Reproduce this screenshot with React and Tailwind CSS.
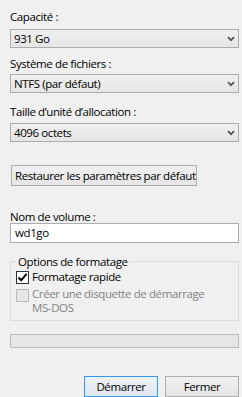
import React from 'react';

const font = { fontFamily: '"Segoe UI", "Open Sans", sans-serif' };

const Chevron = () => (
  <svg width="8" height="6" viewBox="0 0 8 6" className="mr-[3px]">
    <path d="M1 1.2 L4 4.2 L7 1.2" stroke="#555" strokeWidth="1.8" fill="none" />
  </svg>
);

const Combo = ({ value }) => (
  <div className="flex h-[19px] items-center justify-between border border-[#acacac] bg-gradient-to-b from-[#f0f0f0] to-[#e5e5e5] pl-[3px] text-[11.5px] leading-[16px] text-black">
    <span>{value}</span>
    <Chevron />
  </div>
);

const Label = ({ children, className = '' }) => (
  <div className={`h-[16px] text-[11.5px] leading-[16px] text-black ${className}`}>{children}</div>
);

export default function App() {
  return (
    <div
      className="flex h-[397px] w-[242px] flex-col overflow-hidden whitespace-nowrap bg-[#f0f0f0] pl-[10px] pr-[3px] pt-[9px] text-[11.5px] tracking-[-0.4px]"
      style={font}
    >
      <Label>Capacité :</Label>
      <div className="mt-[4px]">
        <Combo value="931 Go" />
      </div>

      <Label className="mt-[8px]">Système de fichiers :</Label>
      <div className="mt-[2px]">
        <Combo value="NTFS (par défaut)" />
      </div>

      <Label className="mt-[11px]">Taille d’unité d’allocation :</Label>
      <div className="mt-[3px]">
        <Combo value="4096 octets" />
      </div>

      <div className="mt-[23px] flex">
        <button className="ml-[1px] h-[21px] w-[186px] border border-[#adadad] bg-gradient-to-b from-[#f0f0f0] to-[#e5e5e5] px-[3px] text-left text-[11.5px] leading-[16px] text-black">
          Restaurer les paramètres par défaut
        </button>
      </div>

      <Label className="mt-[23px]">Nom de volume :</Label>
      <div className="mt-[-2px] flex h-[21px] items-center border border-[#abadb3] bg-white pl-[4px] text-[11.5px] leading-[16px] text-black">
        wd1go
      </div>

      <fieldset className="mt-[11px] border border-[#dcdcdc] pb-[5px] pl-[5px]">
        <legend className="px-[2px] text-[11.5px] leading-[15px] text-black">Options de formatage</legend>
        <div className="flex items-start">
          <div className="mt-[2px] flex h-[13px] w-[13px] items-center justify-center border border-[#333] bg-white">
            <svg width="11" height="11" viewBox="0 0 11 11">
              <path d="M1.5 5.5 L4.2 8.3 L9.6 1.8" stroke="#000" strokeWidth="2" fill="none" />
            </svg>
          </div>
          <span className="ml-[3px] text-[11.5px] leading-[16px] text-black">Formatage rapide</span>
        </div>
        <div className="mt-[2px] flex items-start">
          <div className="mt-[2px] h-[13px] w-[13px] shrink-0 border border-[#bcbcbc] bg-[#e6e6e6]" />
          <span className="ml-[3px] text-[11.5px] leading-[14px] text-[#838383]">
            Créer une disquette de démarrage
            <br />
            MS-DOS
          </span>
        </div>
      </fieldset>

      <div className="mt-[13px] h-[14px] border border-[#bcbcbc] bg-[#e6e6e6]" />

      <div className="mt-[28px] flex justify-end gap-[7px]">
        <button className="h-[21px] w-[74px] border border-[#3399ff] bg-gradient-to-b from-[#eef3f8] to-[#e1e6ec] text-[11.5px] leading-[16px] text-black">
          Démarrer
        </button>
        <button className="h-[21px] w-[74px] border border-[#adadad] bg-gradient-to-b from-[#f0f0f0] to-[#e5e5e5] text-[11.5px] leading-[16px] text-black">
          Fermer
        </button>
      </div>
    </div>
  );
}
